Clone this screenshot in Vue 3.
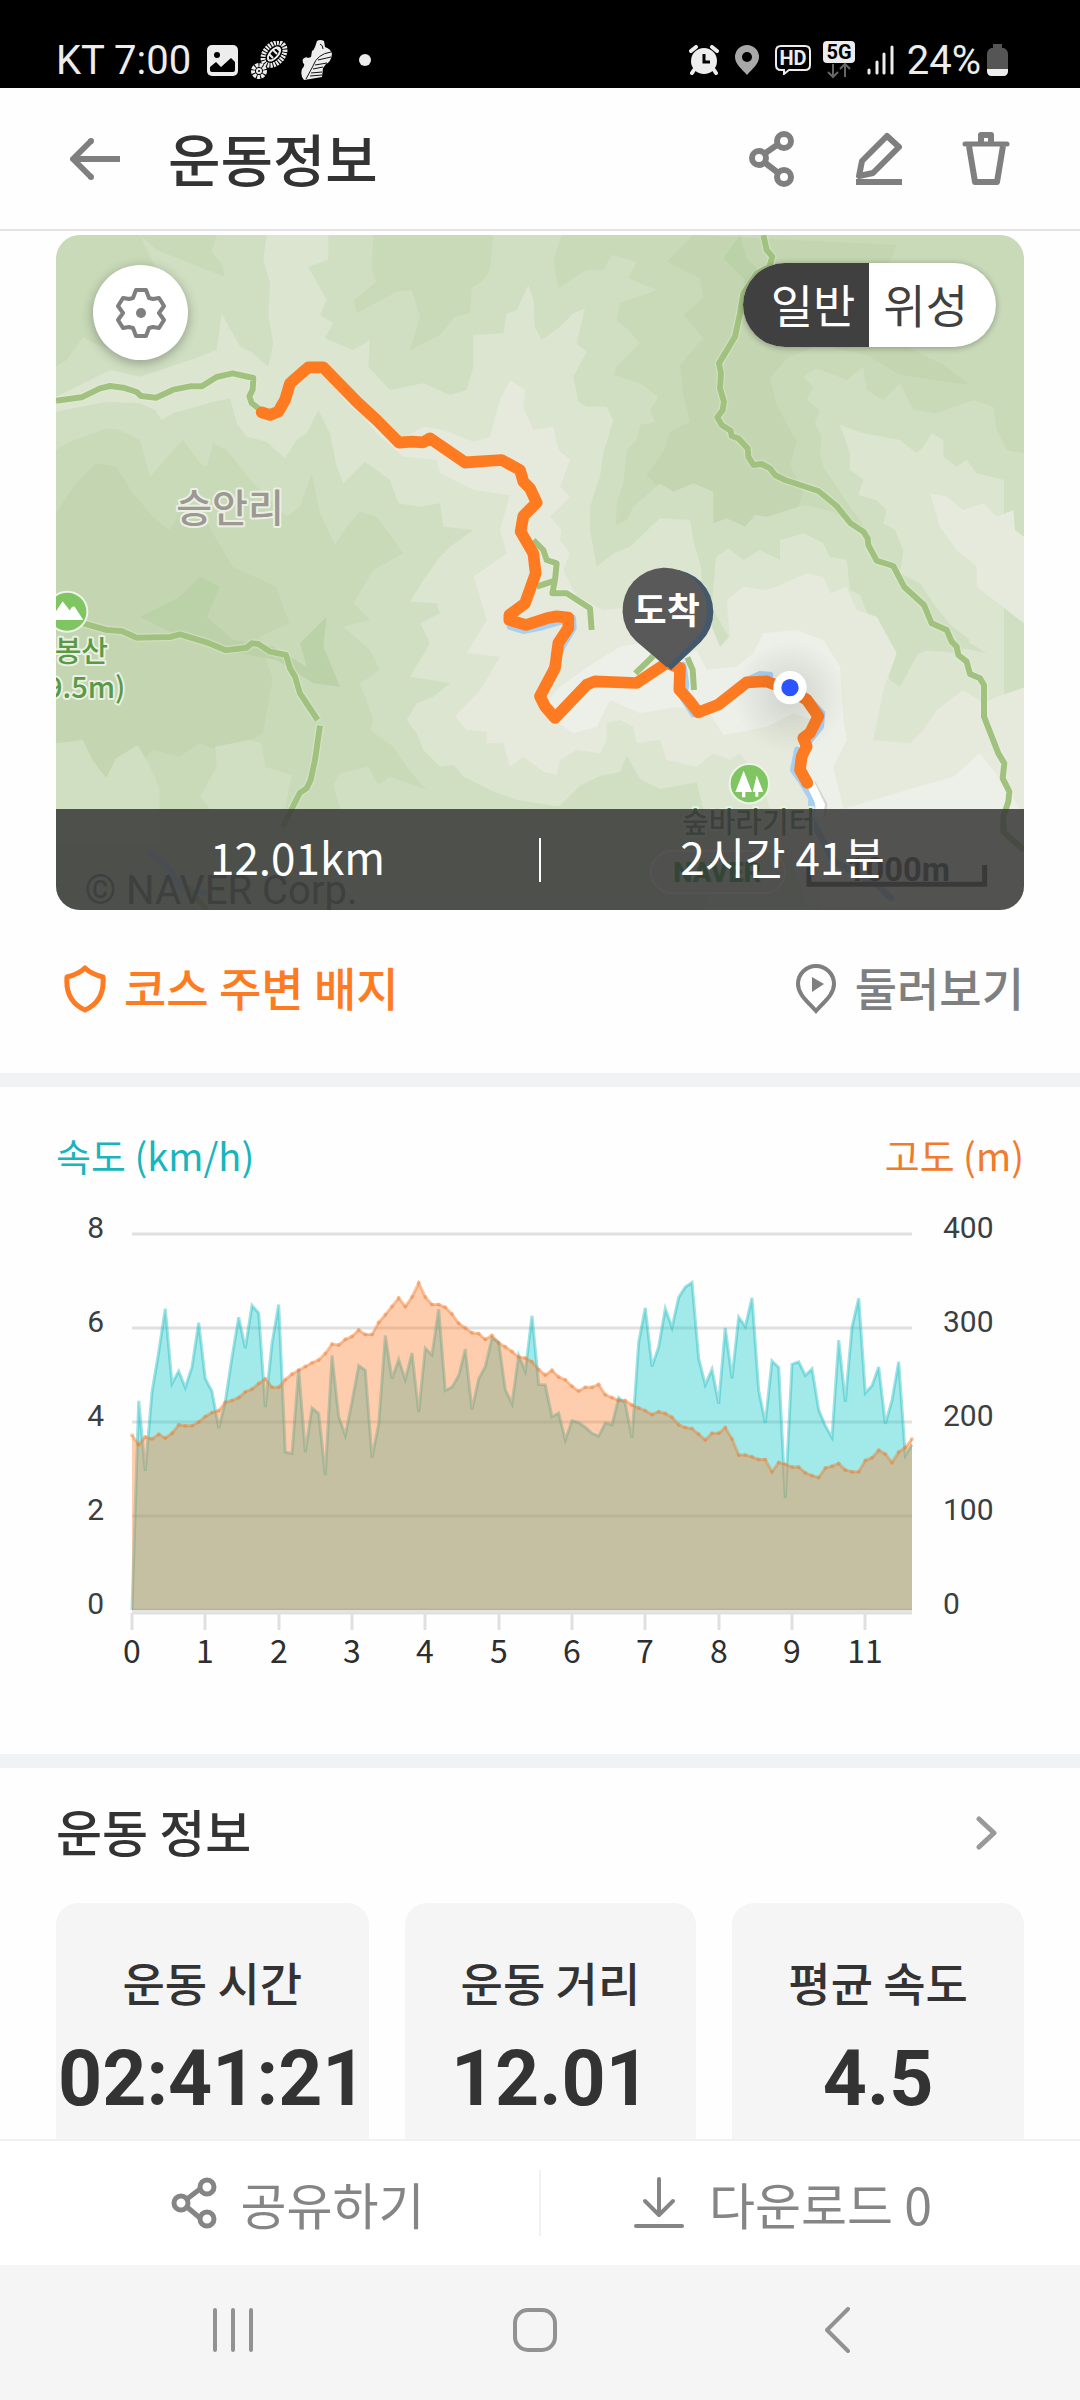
<script setup>
import { ref } from "vue";

const mapType = ref("normal");

const stats = [
  { label: "운동 시간", value: "02:41:21" },
  { label: "운동 거리", value: "12.01" },
  { label: "평균 속도", value: "4.5" },
];

// km/h, one sample per chart step
const speed = [
  0, 4.45, 2.96, 4.64, 5.49, 6.41, 4.82, 5.08, 4.73, 5.17, 6.11, 4.92, 4.65,
  3.87, 4.43, 5.38, 6.23, 5.57, 6.48, 6.32, 4.32, 5.67, 6.5, 3.36, 3.33, 5.13,
  3.36, 4.3, 4.18, 2.87, 5.42, 4.11, 3.72, 4.43, 5.2, 5.1, 3.24, 3.96, 5.84,
  4.92, 5.33, 4.9, 5.47, 4.21, 5.57, 5.43, 6.4, 4.67, 4.74, 4.99, 5.55, 4.26,
  4.92, 5.18, 5.79, 5.7, 4.69, 4.39, 5.42, 5.08, 6.26, 4.8, 4.79, 4.11, 4.19,
  3.62, 4.03, 3.99, 3.89, 3.76, 3.7, 3.98, 3.94, 4.52, 4.4, 3.66, 5.7, 6.43,
  5.18, 5.6, 6.41, 6.01, 6.65, 6.87, 6.97, 5.35, 4.79, 5.12, 4.39, 6, 4.93,
  6.23, 6.03, 6.64, 4.67, 3.98, 5.3, 5.16, 2.38, 5.23, 5.28, 4.99, 5.13, 4.26,
  3.92, 3.67, 5.74, 4.43, 6.02, 6.63, 4.62, 4.77, 5.17, 3.96, 4.46, 5.28, 3.29,
  3.52,
];

// metres above sea level
const altitude = [
  186, 176, 184, 182, 187, 183, 188, 197, 196, 196, 200, 206, 210, 212, 221,
  223, 226, 232, 235, 241, 246, 237, 237, 245, 251, 255, 259, 263, 266, 273,
  283, 282, 288, 291, 298, 293, 293, 306, 314, 323, 332, 323, 333, 348, 333,
  325, 325, 322, 315, 305, 300, 295, 294, 288, 292, 284, 280, 275, 269, 268,
  264, 256, 250, 255, 248, 245, 238, 233, 237, 237, 240, 229, 226, 223, 223,
  218, 215, 212, 208, 211, 209, 205, 197, 194, 193, 187, 181, 188, 188, 194,
  182, 165, 165, 163, 160, 160, 147, 157, 155, 152, 152, 146, 143, 141, 151,
  153, 156, 149, 147, 147, 159, 162, 170, 166, 157, 168, 173, 182,
];

const plot = { left: 76, right: 856, top: 51, bottom: 427 };

function toPoints(values, max) {
  const step = (plot.right - plot.left) / (values.length - 1);
  return values.map((v, i) => [
    +(plot.left + i * step).toFixed(1),
    +(plot.bottom - (v / max) * (plot.bottom - plot.top)).toFixed(1),
  ]);
}

function line(points) {
  return points.map((p) => p.join(",")).join(" ");
}

function area(points) {
  return `${plot.left},${plot.bottom} ${line(points)} ${plot.right},${plot.bottom}`;
}

const speedPoints = toPoints(speed, 8);
const altitudePoints = toPoints(altitude, 400);

const rows = [8, 6, 4, 2, 0].map((v, i) => ({
  speed: v,
  altitude: v * 50,
  y: plot.top + i * 94,
}));

const ticks = ["0", "1", "2", "3", "4", "5", "6", "7", "8", "9", "11"].map(
  (label, i) => ({ label, x: plot.left + Math.round((i * 220) / 3) })
);
</script>

<template>
  <div class="page">
    <div class="status">
      <span>KT 7:00</span>
      <svg class="st-photo" width="31" height="31" viewBox="0 0 31 31">
        <rect width="31" height="31" rx="5" fill="#ededed" />
        <circle cx="10" cy="10" r="3" fill="#000" />
        <path d="M3 22l6-5 5 5 10-9 4 4v8q0 2-2 2H5q-2 0-2-2z" fill="#000" />
      </svg>
      <svg class="st-sole" width="37" height="38" viewBox="0 0 37 38">
        <ellipse cx="23" cy="13" rx="13" ry="9" transform="rotate(-48 23 13)" fill="none" stroke="#ededed" stroke-width="5" stroke-dasharray="2 1" />
        <ellipse cx="23" cy="13" rx="8" ry="4" transform="rotate(-48 23 13)" fill="none" stroke="#ededed" stroke-width="2" />
        <path d="M18 13l4 4M22 9l4 4M25 6l4 4" stroke="#ededed" stroke-width="2" />
        <circle cx="8" cy="30" r="6" fill="none" stroke="#ededed" stroke-width="4" stroke-dasharray="3 1" />
        <circle cx="8" cy="30" r="2" fill="none" stroke="#ededed" stroke-width="2" />
      </svg>
      <svg class="st-shoe" width="32" height="40" viewBox="0 0 32 40">
        <path d="M16 1q3-2 7 0l1 6q6 2 7 7-1 8-6 10l-3 4-1 9-18 3q-4-4-2-11 3-3 2-5-2-2-1-5 3-3 5-1l3-1 1-6q2-1 3-4z" fill="#ededed" />
        <path d="M30 12q-14 2-18 14L5 39M19 4q3 1 3 5M17 20l13-3M14 25l12-2M12 29l10-2M10 33l11-1M9 36l12-1" stroke="#111" stroke-width="1" fill="none" />
      </svg>
      <i class="dot"></i>
      <div class="status-right">
        <svg width="30" height="30" viewBox="0 0 30 30">
          <circle cx="15" cy="16" r="13" fill="#ededed" />
          <path d="M2 6l5-4M28 6l-5-4M5 25l-2 3M25 25l2 3" stroke="#ededed" stroke-width="4" stroke-linecap="round" />
          <path d="M15 9v8h6" stroke="#000" stroke-width="3" fill="none" />
        </svg>
        <svg width="24" height="30" viewBox="0 0 24 30">
          <path d="M12 0a12 12 0 0 1 12 12c0 7-7 12-12 18C7 24 0 19 0 12A12 12 0 0 1 12 0z" fill="#a8a8a8" />
          <circle cx="12" cy="12" r="5" fill="#000" />
        </svg>
        <svg class="st-hd" width="36" height="30" viewBox="0 0 36 30">
          <path d="M6 1h24q5 0 5 5v14q0 5-5 5H14l-5 4v-4H6q-5 0-5-5V6q0-5 5-5z" fill="none" stroke="#ededed" stroke-width="2" />
          <text x="18" y="20" text-anchor="middle" font-size="20" font-weight="700" fill="#ededed">HD</text>
        </svg>
        <svg class="st-5g" width="32" height="38" viewBox="0 0 32 38">
          <rect width="32" height="22" rx="4" fill="#ededed" />
          <text x="16" y="18" text-anchor="middle" font-size="20" font-weight="700" fill="#000">5G</text>
          <path d="M10 23v12M5 31l5 5 5-5M22 36V24M17 28l5-5 5 5" stroke="#666" stroke-width="2" fill="none" />
        </svg>
        <svg class="st-signal" width="28" height="30" viewBox="0 0 28 30">
          <path d="M2 25v3M10 17v11M17 9v19M25 2v26" stroke="#ededed" stroke-width="3" stroke-linecap="round" />
        </svg>
        <span>24%</span>
        <svg class="st-battery" width="22" height="32" viewBox="0 0 22 32">
          <path d="M6 0h9v4h2q4 2 4 6v16q0 6-5 6H5q-5 0-5-6V10q0-4 4-6h2z" fill="#555" />
          <path d="M0 25h21v2q0 5-5 5H5q-5 0-5-5z" fill="#ededed" />
        </svg>
      </div>
    </div>

    <header class="header">
      <button class="back" aria-label="뒤로">
        <svg width="50" height="42" viewBox="0 0 50 42">
          <path d="M50 21H5M21 3L3 21l18 18" fill="none" stroke="#7f7f7f" stroke-width="6" stroke-linejoin="round" />
          <circle cx="21" cy="3" r="3" fill="#7f7f7f" />
          <circle cx="21" cy="39" r="3" fill="#7f7f7f" />
        </svg>
      </button>
      <h1>운동정보</h1>
      <button class="tool" aria-label="공유">
        <svg width="46" height="56" viewBox="0 0 46 56" fill="none" stroke="#7f7f7f" stroke-width="6">
          <path d="M15 23l13-9M15 31l13 10" />
          <circle cx="35" cy="10" r="7" />
          <circle cx="10" cy="27" r="7" />
          <circle cx="35" cy="46" r="7" />
        </svg>
      </button>
      <button class="tool" aria-label="편집">
        <svg width="46" height="54" viewBox="0 0 46 54" fill="none" stroke="#7f7f7f">
          <path d="M31 4L6 29 3 44l14-3 26-26z" stroke-width="6" stroke-linejoin="round" />
          <path d="M0 50h46" stroke-width="6" />
        </svg>
      </button>
      <button class="tool" aria-label="삭제">
        <svg width="48" height="54" viewBox="0 0 48 54" fill="none" stroke="#7f7f7f">
          <path d="M3 12h42" stroke-width="5" stroke-linecap="round" />
          <path d="M19 10V3h10v7M7 14l6 36h22l6-36" stroke-width="6" stroke-linejoin="round" />
        </svg>
      </button>
    </header>

    <main class="content">
      <section class="course">
        <div class="map">
          <svg class="map-canvas" viewBox="48 45 2904 2025" preserveAspectRatio="xMidYMid slice">
            <defs>
              <radialGradient id="dotShadow">
                <stop offset="0" stop-color="#000" stop-opacity=".12" />
                <stop offset="1" stop-color="#000" stop-opacity="0" />
              </radialGradient>
            </defs>
            <rect x="48" y="45" width="2904" height="2025" fill="#c8dab8" />

            <!-- terrain, from the peaks down to the valley -->
            <g fill="#c3d5b1">
              <path d="M48 880l60-90 60-60 60 10 50 80 60 70 50 40 40-60 50-20 40 90 60 100 130 60 40 110-90 40 40 130-30 160-110 60-80-30-60 40-80-20-60 60 10 170-30 30-40-160-60-60-80 30-30-80-70-60z" />
              <path d="M1960 45l-80 80 100 50 10 60-60 50 60 70-70 80 10 90 20 80-60 30-20 60-50 70 80 80 100 60 110 60 60-20 90 30 70-10-60-90 20-60-40-80 20-70-60-110-20-80 50-60 100-40 140 30 100 60 210 30-80-60-160-80-60-70 30-80-100-30 130-50 20-50z" />
            </g>
            <g fill="#bbd1a8">
              <path d="M300 1190l120-60 60-60 60 30-40 90 80 70 120 20 100 60-20-70 80-80-10 90 50 120-80-10-110-70-170-30-100-30z" />
              <path d="M2100 45l20 70 60 60-60 100-30 60 40-80-20-80-60-60z" />
            </g>
            <path fill="#d0dfc2" d="M300 45l50 45 203 80-5-35-33-40 15-50h470l-5 105 15 35-70 55 10 40 120-65 45-5 25 80-30 100 90-45 45-55 45-10 5-75 35-25 20-30 10-105h205l-25 75 15 85 85-55h50l25-45 75 20-25 50 85 35-110 40-10 50 35 30 35 40-70 70-10 25 80 25 55 40-25 40 15 35-45 10-10 45-30 30-10 100-20 60-2 65 32-15 20-40 80-70 40 25 60-25 60 25v95l40-15 55 25 30-35 35 5 115-35 85 20 60 45 60 40-20-30-50-70-80-120-10-40 5-50-20-40 15-40-40-30 20-40-30-30 40-25 90 35 50-40 10 70 50 30 50-50 40 80 70 10 110-40 60 20 10 70 30 60 52 10V2070H900v-303l-20-72 20-35 85-20 30 55 35-25 110 40-60-70-40-60-70-50 10-30-40-110 60-40-30-60-80-70 80-20-50-50 60-100 90-50-50-70-30-40-50-15-40 45-35 55-45-95-25-120-35 100-40 30-50-50-50-50-80-100-40-20-20 70-20-10-50-70-30 30-70 80-30-110-60-30-40-5-110 40-42 25V440l32-20 50-70 30 20 60 20 200-100-60-120z" />
            <g fill="#d0dfc2">
              <path d="M48 1570l80-10 30 60 40 55 30-60 65-40 35 60 30 70v165H48z" />
              <path d="M480 1730l50-90-5-60 100-20 40 10 10 70 80 25-20 102H510z" />
            </g>
            <path fill="#dbe5cf" d="M680 45h185v75l-60 20 55 100-20 45 40 25-25 45 85 35 50-30-5 80 65 70 100-20 80 35 50-15 20-70v-95l90-5 10-60 30-10 35-75 15 45 5 80 20 40 55-40 40-40 35-15-25 105 30 25-40 75 15 75 25 15h60l20 40-30 100-10 70-30 90v70l20 110 50-40 50-20 90-85 90 5 10 60 25 90v50h25l20-90 35-25 45 35 50-30 60 30v-60l70-20 60 30 20 40 50 10 10 90 100 50 30 80 80 60 60-30 140 30-80-50-80-100-40-60-60-30 10-70-25-60-35-20 10-40-30-30-55-15 15-45-40-30v-50l-30-85 70 25 110 20 50 40 20-20 25-40 35 20v50l40 30 30-20 30 40 82 20V2070H1150l200-360-80-40-30-35-40 5-50-50-20-50-30-40 30-50 50-20 50-40-120-20 60-100-30-60 60-30-10-30-80-5 40-65 50-70 30-30 70-50-90-10-10-70-60 10-65-10-25-70-75-55-65 65-20-50-20-100-35-70-35 70-30 20-35 55-55-50-60-15-30-40-20-75-50 10-120 35-35 20-20-30-45-20-100-5-152 30v-45l102-50 60-30 90 20 150-50 80-30 15-110 55 100 40 20 45 40 15-70-15-80 5-100-20-70z" />
            <g fill="#d0dfc2">
              <path d="M1500 1767l60-10 60-60 60-30 60-10 20-50 40 70 60 30 110-20 20 80 60 90-60 213h-500z" />
              <path d="M1980 1140l15-100h30l-10 120 50 90-30 40h-30z" />
              <path d="M2420 1020l90 30 110 80 80 60 90 70-30 40-120-10-60 110-30-20-60-180z" />
              <path d="M1150 2070l-80-300 90-60 110-40 80 40 80 30 130 20-60 310z" />
            </g>
            <path fill="#e6eadc" d="M860 470l70 90 90 70 60 30 70-40 60 10 90 35 50-15 30-110 30-60 45 30-5 50 30 70 60-10 15 70 35 30-30 80 30 30-60 60 35 40-5 30 30 40-20 50 40 80 80 40 100-10 70-30 50-30 50-30 40 30-5 70 45 110 30-30-10-110 50-40 60 10 40-10 90-40 50 10 20 50 50-20 30 70 60 20 60 110-40 110-30 150 110 10 40-40 40-60 80-60 60 40 40-20 92-30V2070h-652l-120-303-20-67-70-100-30 20-50-20-50 40-90-20-20-60-70 10-10-50-40-20-40 10v50l-20 40-70-10-50 30-10 45-40-10-60-45-40 30-20-70h-50v-35l-60-5-35-40 75-80 60-100-100-10 60-100-30-100-10-30 100-70-20-70 30-105-110-15-100-50-10-40-100-10-80-70z" />
            <path fill="#e6eadc" d="M2670 820l50 10 50 40 60-20 40 40 50-20 5 60 27 20v260l-142-110v-60l-60-50-50-70z" />
            <path fill="#edf0e9" d="M1560 1400l100-70 80-50 60-10 90 60 80-40 30 60 90-10 50-40 30-60 100-10 80 30 50 80 10 160 10 60-40 80 30 127 190-57 140-40 80-70 70 90 50 77v303h-600l-30-303 20-77-50-50-10-50 50-90-60-20-80 40-130 25-40-65-100-20-110 20-90-40-40 80-70 20-100-70z" />

            <!-- streams -->
            <g fill="none" stroke="#a7cff0" stroke-width="20" stroke-linecap="round" stroke-linejoin="round">
              <path d="M1275 736l28-1M1410 1220l40 12 60-12 60-18 28-8 2 30-30 50-30 60-35 90M1930 1335l8 60-8 40 30 47 80-25 90-80 30-14 30 2M2300 1430l46 50-4 40-40 50" />
              <path d="M2272 1590l-12 60 25 35 30 50-2 60 70 130 130 70 40 40M330 1900l50 40 40 60 70 20" />
            </g>
            <path d="M2312 1690l35 65-5 35" fill="none" stroke="#d5d5d5" stroke-width="30" />
            <path d="M2310 1688l32 67-5 35" fill="none" stroke="#fff" stroke-width="25" />

            <!-- hiking trails -->
            <g fill="none" stroke="#a1c27f" stroke-width="18" stroke-linejoin="round" class="trails">
              <path d="M48 542l77-10 55-27 30-7 40 5 40 13 13 12 45 5 52-24 50-10h35l45-28 48-11 62 14-2 35-10 20 7 20 25 20" />
              <path d="M2170 45l10 45 17 20-9 30-38 20-40 60-10 60-15 70-48 80 6 30-3 45 12 40-4 25-16 22 13 23 27 17 3 16 20 7 28 30 2 25 15 25 25-3 25 13 15 20 30 15 100 33 55 45 42 52 38 25 13 20 2 20 25 47 50 16 32 62 60 55 23 55 45 20 15 35 15 15 5 25 25 20 10 37 30 13 12 20v95l43 110 18 30-5 45 20 40-3 30-15 45v45l62 55" />
              <path d="M130 1210l70 20 45 3 45 20 100-2 30-8 80 24 57 24 63-8 15-13 20 2 35 23 48 10 12 40 15 25 15 50 53 80M840 1517l-15 103-13 60-12 25-20 13-25 49-27 55M440 2000l60 70" />
              <path d="M1480 960l30 30 10 30 30 10-5 50-8 40h43l70 45 5 65M1490 1100l55-18M1786 1360l54-52M1942 1312l16 38 4 60" />
            </g>

            <path
              d="M665 577l25 8 25-10 20-35 15-50 40-35 15-13h45l100 103 60 55 67 68 38-3 35 2 20-12 105 72 110-7 55 30 10 35 20 20 20 43-40 40-8 47 38 65 7 60-32 90-47 35v15l50 15 62-20 30-6 35 4v31l-30 45-10 75-45 85 15 30 30 35 95-100 25-10 125 5 90-60 40 15-2 65 27 30 30 38 60-23 85-67 60-3 70 28 50 27 35 50-25 50-20 15 10 25-15 30-5 40 22 40"
              fill="none" stroke="#ff7b22" stroke-width="35" stroke-linecap="round" stroke-linejoin="round"
            />

            <circle cx="2250" cy="1430" r="170" fill="url(#dotShadow)" />
            <circle cx="2250" cy="1403" r="50" fill="#fff" />
            <circle cx="2250" cy="1403" r="26" fill="#2b53ff" />

            <path d="M1893 1350l90-85a127 127 0 1 0-180 0z" fill="#44586b" />
            <path d="M1880 1342l-92-79a127 127 0 1 1 181-8z" fill="#595959" />
            <text x="1880" y="1211" text-anchor="middle" font-size="108" font-weight="700" fill="#fff">도착</text>

            <circle cx="82" cy="1175" r="60" fill="#7fc561" stroke="#eef3ea" stroke-width="6" />
            <path d="M30 1200l38-56 22 28q4-14 14-12l26 40z" fill="#fff" />
            <circle cx="2128" cy="1691" r="59" fill="#7fc561" stroke="#eef3ea" stroke-width="6" />
            <path d="M2111 1652l25 64h-20v16h-10v-16h-20zM2150 1666l20 50h-15v14h-9v-14h-8z" fill="#fff" />

            <g class="place">
              <text x="570" y="907" text-anchor="middle" font-size="117" fill="#9d9892">승안리</text>
              <text x="204" y="1325" text-anchor="end" font-size="87" fill="#5a9a45">봉산</text>
              <text x="256" y="1434" text-anchor="end" font-size="87" fill="#5a9a45">9.5m)</text>
              <text x="2126" y="1840" text-anchor="middle" font-size="87" fill="#4c7c3c">숲바라기터</text>
            </g>
            <rect x="1833" y="1892" width="402" height="128" rx="64" fill="#dfe8d8" stroke="#fff" stroke-width="5" />
            <text x="2032" y="1985" text-anchor="middle" class="roboto" font-size="82" font-weight="900" fill="#129a3c">NAVER</text>
            <text x="2575" y="1982" text-anchor="middle" class="roboto" font-size="98" font-weight="700" fill="#444">1000m</text>
            <path d="M2307 1935v58h527v-58" fill="none" stroke="#444" stroke-width="15" />
            <text x="134" y="2052" class="roboto" font-size="120" fill="#6a6a6a">© NAVER Corp.</text>
          </svg>

          <button class="settings" aria-label="지도 설정">
            <svg width="50" height="50" viewBox="0 0 50 50">
              <path d="M20 2h10l3 8 4 1 6-1 5 8-5 7 5 7-5 8-6-1-4 1-3 8H20l-3-8-4-1-6 1-5-8 5-7-5-7 5-8 6 1 4-1z" fill="none" stroke="#7f7f7f" stroke-width="4" stroke-linejoin="round" />
              <circle cx="25" cy="25" r="5" fill="#7f7f7f" />
            </svg>
          </button>

          <div class="map-type">
            <button :class="{ on: mapType === 'normal' }" @click="mapType = 'normal'">일반</button>
            <button :class="{ on: mapType === 'satellite' }" @click="mapType = 'satellite'">위성</button>
          </div>

          <div class="summary">
            <span>12.01km</span>
            <i></i>
            <span>2시간 41분</span>
          </div>
        </div>

        <div class="links">
          <a href="#badges" class="badge-link">
            <svg width="42" height="48" viewBox="0 0 42 48">
              <path d="M21 3q6 6 18 9 2 24-18 33Q1 36 3 12 15 9 21 3z" fill="none" stroke="#ff7b22" stroke-width="5" stroke-linejoin="round" />
            </svg>
            <span>코스 주변 배지</span>
          </a>
          <a href="#tour" class="tour-link">
            <svg width="42" height="50" viewBox="0 0 42 50">
              <path d="M21 2a18 18 0 0 1 18 18c0 10-9 17-18 27C12 37 3 30 3 20A18 18 0 0 1 21 2z" fill="none" stroke="#7f7f7f" stroke-width="4" />
              <path d="M17 13l12 7-12 8z" fill="#7f7f7f" />
            </svg>
            <span>둘러보기</span>
          </a>
        </div>
      </section>

      <section class="chart">
        <div class="chart-head">
          <span class="speed">속도 (km/h)</span>
          <span class="altitude">고도 (m)</span>
        </div>
        <svg class="plot" viewBox="0 0 968 500">
          <g v-for="row in rows" :key="row.speed">
            <line :x1="plot.left" :x2="plot.right" :y1="row.y" :y2="row.y" class="grid" />
            <text x="48" :y="row.y + 4" text-anchor="end" class="axis-y">{{ row.speed }}</text>
            <text x="887" :y="row.y + 4" class="axis-y">{{ row.altitude }}</text>
          </g>
          <polygon :points="area(speedPoints)" class="speed-area" />
          <polyline :points="line(speedPoints)" class="speed-line" />
          <polygon :points="area(altitudePoints)" class="altitude-area" />
          <polyline :points="line(altitudePoints)" class="altitude-line" />
          <circle v-for="p in altitudePoints" :key="p[0]" :cx="p[0]" :cy="p[1]" r="2" class="altitude-dot" />
          <line :x1="plot.left" :x2="plot.right" y1="430" y2="430" class="grid" />
          <g v-for="tick in ticks" :key="tick.label">
            <line :x1="tick.x" :x2="tick.x" y1="430" y2="447" class="grid" />
            <text :x="tick.x" y="480" text-anchor="middle" class="axis-x">{{ tick.label }}</text>
          </g>
        </svg>
      </section>

      <section class="info">
        <div class="info-head">
          <h2>운동 정보</h2>
          <button aria-label="더보기">
            <svg width="22" height="34" viewBox="0 0 22 34">
              <path d="M3 3l15 14L3 31" fill="none" stroke="#999" stroke-width="5" stroke-linecap="round" stroke-linejoin="round" />
            </svg>
          </button>
        </div>
        <div class="cards">
          <div v-for="stat in stats" :key="stat.label" class="card">
            <span class="label">{{ stat.label }}</span>
            <strong>{{ stat.value }}</strong>
          </div>
        </div>
      </section>
    </main>

    <div class="actions">
      <button>
        <svg width="46" height="52" viewBox="0 0 46 52" fill="none" stroke="#858585" stroke-width="5">
          <path d="M16 22l13-10M16 30l13 11" />
          <circle cx="36" cy="10" r="7" />
          <circle cx="10" cy="26" r="7" />
          <circle cx="36" cy="42" r="7" />
        </svg>
        공유하기
      </button>
      <i></i>
      <button>
        <svg width="52" height="52" viewBox="0 0 52 52" fill="none" stroke="#858585" stroke-width="4" stroke-linecap="round" stroke-linejoin="round">
          <path d="M26 2v36M12 24l14 14 14-14M3 49h46" />
        </svg>
        다운로드 0
      </button>
    </div>

    <nav class="navbar">
      <button aria-label="최근 앱">
        <svg width="40" height="44" viewBox="0 0 40 44">
          <path d="M2 2v40M20 2v40M38 2v40" stroke="#929292" stroke-width="4" stroke-linecap="round" />
        </svg>
      </button>
      <button aria-label="홈">
        <svg width="44" height="44" viewBox="0 0 44 44">
          <rect x="2" y="2" width="40" height="40" rx="13" fill="none" stroke="#929292" stroke-width="4" />
        </svg>
      </button>
      <button aria-label="뒤로 가기">
        <svg width="26" height="46" viewBox="0 0 26 46">
          <path d="M23 2L2 23l21 21" fill="none" stroke="#929292" stroke-width="4" stroke-linecap="round" stroke-linejoin="round" />
        </svg>
      </button>
    </nav>
  </div>
</template>

<style>
body {
  margin: 0;
  background: #fefefe;
}
</style>

<style scoped>
.page {
  display: flex;
  flex-direction: column;
  height: 100vh;
  overflow: hidden;
  background: #fefefe;
  color: #333;
  font-family: "Noto Sans CJK KR", sans-serif;
}

button {
  display: flex;
  align-items: center;
  justify-content: center;
  padding: 0;
  border: none;
  background: none;
  color: inherit;
  font: inherit;
  cursor: pointer;
}

svg {
  display: block;
  flex-shrink: 0;
}

h1,
h2 {
  margin: 0;
  font-weight: 500;
}

/* status bar */
.status {
  display: flex;
  align-items: center;
  height: 56px;
  padding: 32px 71px 0 56px;
  background: #000;
  color: #ededed;
  font-family: Roboto, sans-serif;
  font-size: 40px;
}

.status-right {
  display: flex;
  align-items: center;
  gap: 16px;
  margin-left: auto;
}

.st-photo {
  margin-left: 16px;
}

.st-sole,
.st-shoe {
  margin-left: 13px;
}

.dot {
  width: 12px;
  height: 12px;
  margin-left: 26px;
  border-radius: 50%;
  background: #ededed;
}

.st-5g {
  margin-left: -4px;
}

.st-signal {
  margin: 0 -4px;
}

.st-battery {
  margin-left: -10px;
}

/* header */
.header {
  display: flex;
  align-items: center;
  height: 141px;
  padding: 0 41px 0 47px;
  border-bottom: 2px solid #e3e3e3;
}

.back {
  width: 96px;
  height: 96px;
}

.header h1 {
  flex: 1;
  margin-left: 25px;
  padding-bottom: 3px;
  font-size: 57px;
}

.tool {
  width: 107px;
  height: 96px;
}

.content {
  flex: 1;
  min-height: 0;
  overflow: hidden;
}

/* map */
.course {
  padding: 4px 56px 0;
}

.map {
  position: relative;
  overflow: hidden;
  aspect-ratio: 968 / 675;
  border-radius: 24px;
}

.map-canvas {
  width: 100%;
  height: 100%;
}

.trails {
  filter: drop-shadow(0 0 3px #eef3e6);
}

.place text {
  font-weight: 500;
  stroke: #eaf0e4;
  stroke-width: 12px;
  stroke-linejoin: round;
  paint-order: stroke;
}

.roboto {
  font-family: Roboto, sans-serif;
}

.settings {
  position: absolute;
  top: 30px;
  left: 37px;
  width: 95px;
  height: 95px;
  border-radius: 50%;
  background: #fff;
  box-shadow: 0 3px 12px rgba(0, 0, 0, 0.3);
}

.map-type {
  position: absolute;
  top: 28px;
  right: 28px;
  display: flex;
  overflow: hidden;
  border-radius: 42px;
  background: #fff;
  box-shadow: 0 1px 6px rgba(0, 0, 0, 0.3);
}

.map-type button {
  height: 84px;
  padding: 0 14px 4px;
  box-sizing: border-box;
  color: #404040;
  font-size: 46px;
}

.map-type button:first-child {
  padding-left: 28px;
}

.map-type button:last-child {
  padding-right: 28px;
}

.map-type .on {
  background: #404040;
  color: #fff;
}

.summary {
  position: absolute;
  right: 0;
  bottom: 0;
  left: 0;
  display: flex;
  align-items: center;
  height: 101px;
  background: rgba(56, 56, 56, 0.86);
  color: #fff;
  font-size: 44px;
}

.summary span {
  flex: 1;
  padding-bottom: 8px;
  text-align: center;
}

.summary i {
  width: 2px;
  height: 44px;
  background: #fff;
}

/* course links */
.links {
  display: flex;
  align-items: center;
  justify-content: space-between;
  height: 157px;
  padding-bottom: 6px;
  font-size: 46px;
  font-weight: 500;
}

.links a {
  display: flex;
  align-items: center;
  gap: 18px;
  text-decoration: none;
}

.links span {
  padding-bottom: 5px;
}

.badge-link {
  padding-left: 8px;
  color: #ff7b22;
}

.tour-link {
  color: #7f7f7f;
}

/* chart */
.chart {
  padding: 42px 56px 71px;
  border-top: 14px solid #f1f2f4;
}

.chart-head {
  display: flex;
  justify-content: space-between;
  padding-bottom: 2px;
  font-size: 38px;
  line-height: 52px;
}

.speed {
  color: #19b5bc;
}

.altitude {
  color: #f07b2d;
}

.plot {
  width: 100%;
  height: auto;
}

.grid {
  stroke: #e0e0e0;
  stroke-width: 3;
}

.axis-y {
  fill: #3a3f42;
  font-family: Roboto, sans-serif;
  font-size: 30px;
}

.axis-x {
  fill: #2e2e2e;
  font-size: 32px;
}

.speed-area {
  fill: rgba(25, 202, 205, 0.4);
}

.speed-line {
  fill: none;
  stroke: rgba(25, 184, 190, 0.4);
  stroke-width: 3;
}

.altitude-area {
  fill: rgba(255, 122, 36, 0.37);
}

.altitude-line {
  fill: none;
  stroke: rgba(240, 120, 40, 0.4);
  stroke-width: 3;
}

.altitude-dot {
  fill: rgba(240, 120, 40, 0.35);
}

/* workout info */
.info {
  padding: 35px 56px 0;
  border-top: 14px solid #f1f2f4;
}

.info-head {
  display: flex;
  align-items: center;
  justify-content: space-between;
  height: 60px;
  padding-right: 26px;
}

.info-head h2 {
  padding-bottom: 6px;
  font-size: 50px;
}

.cards {
  display: grid;
  grid-template-columns: 15fr 14fr 14fr;
  gap: 36px;
  margin-top: 40px;
}

.card {
  display: flex;
  flex-direction: column;
  align-items: center;
  gap: 23px;
  padding: 48px 0;
  border-radius: 22px;
  background: #f5f5f5;
}

.label {
  font-size: 46px;
  font-weight: 500;
  line-height: 60px;
}

.card strong {
  font-family: Roboto, sans-serif;
  font-size: 77px;
  line-height: 90px;
}

/* bottom actions */
.actions {
  display: flex;
  align-items: center;
  height: 124px;
  padding: 0 56px;
  border-top: 2px solid #f1f1f1;
  background: #fff;
  color: #858585;
}

.actions button {
  flex: 1;
  gap: 24px;
  height: 100%;
  font-size: 50px;
}

.actions i {
  width: 2px;
  height: 66px;
  background: #f1f1f1;
}

.navbar {
  display: flex;
  height: 130px;
  padding: 0 91px 5px 82px;
  background: #f5f5f5;
}

.navbar button {
  flex: 1;
}
</style>
